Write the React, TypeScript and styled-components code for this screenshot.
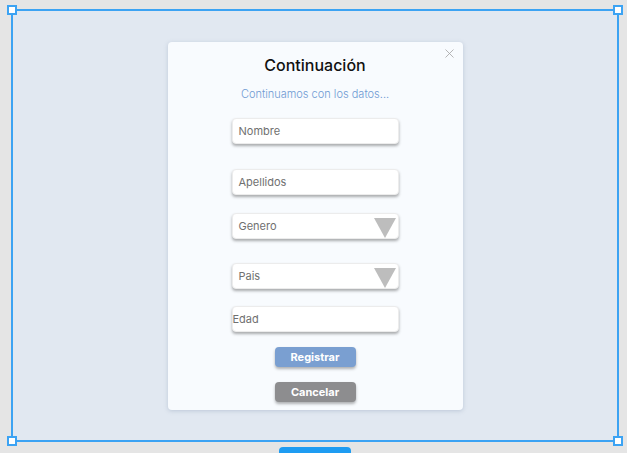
import React from "react";
import styled, { createGlobalStyle } from "styled-components";

const GlobalStyle = createGlobalStyle`
  html, body {
    margin: 0;
    padding: 0;
    background: #e5e5e5;
    font-family: "Inter", "Noto Sans", sans-serif;
  }
  body {
    padding: 9px 0 0 11px;
    width: 627px;
    height: 453px;
    box-sizing: border-box;
    overflow: hidden;
  }
`;

const Frame = styled.div`
  position: relative;
  box-sizing: border-box;
  width: 608px;
  height: 433px;
  border: 2px solid #3ca3f3;
  background: #e1e8f1;
  display: flex;
  align-items: center;
  justify-content: center;
`;

const Handle = styled.span<{ $x: "left" | "right"; $y: "top" | "bottom" }>`
  position: absolute;
  width: 6px;
  height: 6px;
  background: #fff;
  border: 2px solid #3ca3f3;
  ${(p) => p.$x}: -6px;
  ${(p) => p.$y}: -6px;
`;

const BottomTab = styled.div`
  position: absolute;
  left: 266px;
  bottom: -13px;
  width: 72px;
  height: 6px;
  background: #1e9cf2;
  border-radius: 4px 4px 0 0;
`;

const Card = styled.div`
  position: relative;
  box-sizing: border-box;
  width: 295px;
  height: 368px;
  background: #f8fbfe;
  border-radius: 4px;
  box-shadow: 0 1px 4px rgba(120, 140, 170, 0.35);
  display: flex;
  flex-direction: column;
  align-items: center;
  padding-top: 13px;
`;

const Close = styled.button`
  position: absolute;
  top: 6px;
  right: 7px;
  width: 12px;
  height: 12px;
  padding: 0;
  border: none;
  background: none;
  display: flex;
  align-items: center;
  justify-content: center;
`;

const Title = styled.h2`
  margin: 0;
  font-size: 16px;
  line-height: 20px;
  font-weight: 500;
  color: #111;
`;

const Subtitle = styled.p`
  margin: 12px 0 0;
  font-size: 11px;
  line-height: 14px;
  font-weight: 300;
  color: #6f9ad3;
`;

const Field = styled.div<{ $mt: number; $flush?: boolean }>`
  position: relative;
  box-sizing: border-box;
  margin-top: ${(p) => p.$mt}px;
  width: 167px;
  height: 26px;
  background: #fff;
  border: 1px solid #ececec;
  border-radius: 4px;
  box-shadow: 0 2px 3px rgba(0, 0, 0, 0.32);
  display: flex;
  align-items: center;
  padding-left: ${(p) => (p.$flush ? 0 : 6)}px;
  font-size: 11px;
  color: #707070;
`;

const Arrow = styled.span`
  position: absolute;
  right: 2px;
  top: 4px;
  width: 0;
  height: 0;
  border-left: 11px solid transparent;
  border-right: 11px solid transparent;
  border-top: 20px solid #bdbdbd;
`;

const Button = styled.button<{ $tone: "primary" | "muted"; $mt: number }>`
  margin-top: ${(p) => p.$mt}px;
  width: 81px;
  height: 20px;
  border: none;
  border-radius: 4px;
  background: ${(p) => (p.$tone === "primary" ? "#7a9fd1" : "#8d8d8f")};
  box-shadow: 0 2px 3px rgba(0, 0, 0, 0.3);
  color: #fff;
  font-family: "Inter", "Noto Sans", sans-serif;
  font-size: 11px;
  font-weight: 700;
  padding: 0;
`;

export default function App() {
  return (
    <>
      <GlobalStyle />
      <Frame>
        <Handle $x="left" $y="top" />
        <Handle $x="right" $y="top" />
        <Handle $x="left" $y="bottom" />
        <Handle $x="right" $y="bottom" />
        <BottomTab />
        <Card>
          <Close>
            <svg width="9" height="9" viewBox="0 0 9 9">
              <path d="M0.5 0.5 L8.5 8.5 M8.5 0.5 L0.5 8.5" stroke="#a3a3a3" strokeWidth="0.8" />
            </svg>
          </Close>
          <Title>Continuación</Title>
          <Subtitle>Continuamos con los datos...</Subtitle>
          <Field $mt={17}>Nombre</Field>
          <Field $mt={25}>Apellidos</Field>
          <Field $mt={18}>
            Genero
            <Arrow />
          </Field>
          <Field $mt={24}>
            Pais
            <Arrow />
          </Field>
          <Field $mt={17} $flush>
            Edad
          </Field>
          <Button $tone="primary" $mt={15}>Registrar</Button>
          <Button $tone="muted" $mt={15}>Cancelar</Button>
        </Card>
      </Frame>
    </>
  );
}
